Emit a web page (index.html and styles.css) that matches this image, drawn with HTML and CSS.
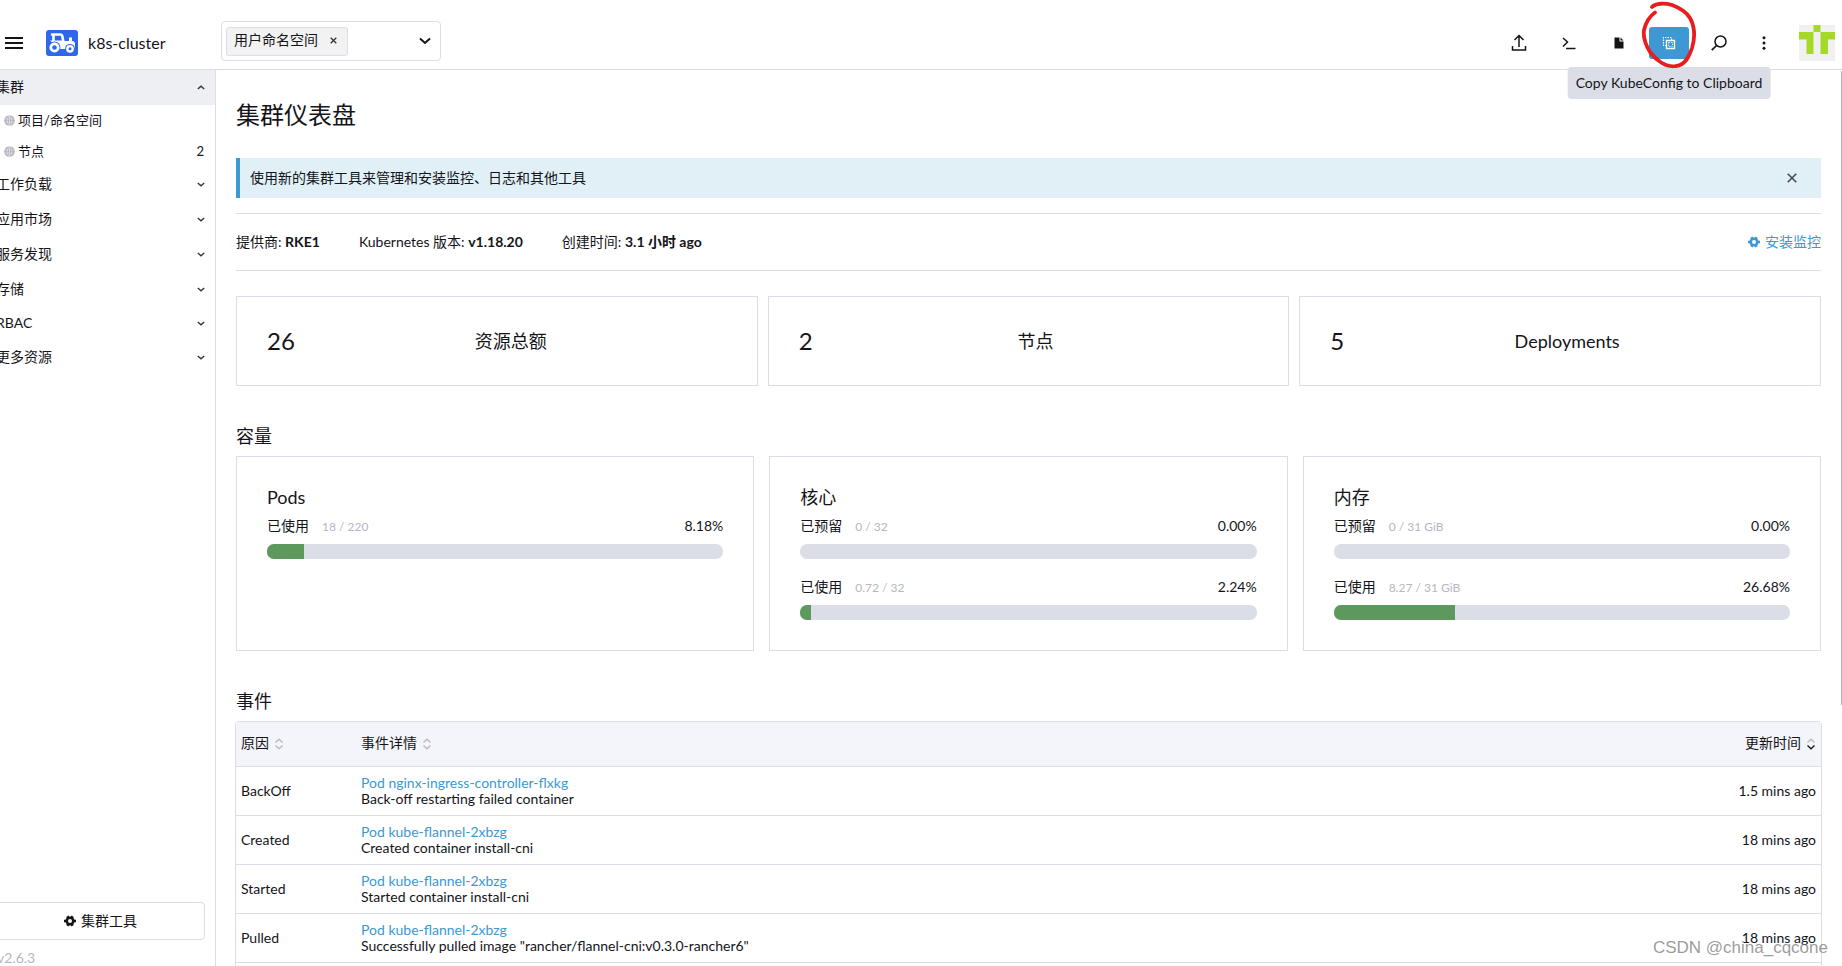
FILE: index.html
```html
<!DOCTYPE html>
<html lang="zh-CN">
<head>
<meta charset="utf-8">
<title>k8s-cluster</title>
<link rel="stylesheet" href="styles.css">
</head>
<body>
<svg class="defs" aria-hidden="true">
  <symbol id="down" viewBox="0 0 10 6"><path d="M1 1l4 3.6L9 1" fill="none" stroke="currentColor" stroke-width="1.7"/></symbol>
  <symbol id="globe" viewBox="0 0 12 12"><circle cx="6" cy="6" r="5.8" fill="#b3b4be"/><path d="M.8 4.200h10.400M.8 7.800h10.400M6 .5v11M5.500.8C2.800 3.500 2.800 8.500 5.500 11.200M6.500.8C9.200 3.500 9.200 8.500 6.500 11.200" fill="none" stroke="#fff" stroke-width=".45"/></symbol>
  <symbol id="gear" viewBox="0 0 12 12"><circle cx="6" cy="6" r="3.300" fill="none" stroke="currentColor" stroke-width="2.600"/><path d="M3.300 1.200l1 1.600M8.700 1.200l-1 1.600M0 6h2M10 6h2M3.300 10.800l1-1.600M8.700 10.800l-1-1.600" stroke="currentColor" stroke-width="2.600"/></symbol>
  <symbol id="sort" viewBox="0 0 10 12"><path d="M1.500 4.500L5 1.200l3.500 3.300" fill="none" stroke="#b9bac2" stroke-width="1.300"/><path d="M1.500 7.500L5 10.800l3.500-3.300" fill="none" stroke="currentColor" stroke-width="1.300"/></symbol>
</svg>

<header class="header">
  <button class="menu" aria-label="Menu"><svg width="18" height="12" viewBox="0 0 18 12"><path d="M0 1h18M0 6h18M0 11h18" stroke="#141419" stroke-width="2"/></svg></button>
  <svg class="logo" width="32" height="26" viewBox="0 0 32 26"><rect width="32" height="26" rx="3" fill="#2e68e9"/><path d="M6 4.500h8.500q1.500 0 1.800 1.500l1 5.500M7.500 6v5" fill="none" stroke="#fff" stroke-width="2.600" stroke-linejoin="round" stroke-linecap="round"/><path d="M4 10.500h13l1 .5h5V7.500h3V11q3 0 3 3v5H14z" fill="#fff"/><circle cx="8.500" cy="17.500" r="6" fill="#2e68e9"/><circle cx="8.500" cy="17.500" r="3.700" fill="none" stroke="#fff" stroke-width="2.800"/><circle cx="24" cy="18.800" r="4.900" fill="#2e68e9"/><circle cx="24" cy="18.800" r="2.700" fill="none" stroke="#fff" stroke-width="2.400"/></svg>
  <span class="cluster">k8s-cluster</span>
  <div class="filter">
    <span class="tag">用户命名空间 <button class="tag-x" aria-label="移除"><svg width="7" height="7" viewBox="0 0 7 7"><path d="M.7.7l5.600 5.600M6.300.7L.7 6.300" stroke="#333" stroke-width="1.300"/></svg></button></span>
    <button class="open" aria-label="展开"><svg width="12" height="8" viewBox="0 0 12 8"><path d="M1 1.500l5 4.500 5-4.500" fill="none" stroke="#141419" stroke-width="2"/></svg></button>
  </div>
  <nav class="actions">
    <button class="act" aria-label="Import YAML"><svg width="16" height="18" viewBox="0 0 16 18"><path d="M8 13V2M3.500 6L8 1.500 12.500 6M1.500 12v4h13v-4" fill="none" stroke="#141419" stroke-width="1.500"/></svg></button>
    <button class="act" aria-label="Kubectl Shell"><svg width="14" height="14" viewBox="0 0 14 14"><path d="M1 2l4.500 4L1 10.500M4 12.500h9.500" fill="none" stroke="#141419" stroke-width="1.500"/></svg></button>
    <button class="act" aria-label="Download KubeConfig"><svg width="10" height="12" viewBox="0 0 10 12"><path d="M.5.5h5v4h4v7h-9zM6.500.5l3 3h-3z" fill="#141419"/></svg></button>
    <div class="copy-wrap">
      <button class="act copy" aria-label="Copy KubeConfig" aria-describedby="tip"><svg width="14" height="14" viewBox="0 0 14 14"><path d="M4.500 9.500h-3v-8h8v3" fill="none" stroke="#fff" stroke-width="1.200" stroke-dasharray="1.500 1"/><path d="M4.500 4.500h8v8h-8z" fill="none" stroke="#fff" stroke-width="1.300"/><path d="M6.500 6.500h4v4h-4z" fill="none" stroke="#fff" stroke-width=".8" stroke-dasharray="1.500 1"/></svg></button>
      <div class="tip" id="tip" role="tooltip">Copy KubeConfig to Clipboard</div>
      <svg class="ring" width="60" height="70" viewBox="0 0 60 70"><path d="M11 6C15 2 24 2 31 4C39 7 45 10 49 17C54 26 54 37 51 47C48 56 44 64 35 65C25 67 15 59 9 51C4 43 2 36 3 29C5 21 9 15 14 11.500" fill="none" stroke="#e81e1e" stroke-width="3.800" stroke-linecap="round"/></svg>
    </div>
    <button class="act" aria-label="Search"><svg width="16" height="16" viewBox="0 0 16 16"><circle cx="9.500" cy="6.500" r="5.500" fill="none" stroke="#141419" stroke-width="1.500"/><path d="M5.500 10.500L.8 15.200" stroke="#141419" stroke-width="1.700"/></svg></button>
    <button class="act dots" aria-label="More"><svg width="4" height="14" viewBox="0 0 4 14"><g fill="#141419"><circle cx="2" cy="1.700" r="1.500"/><circle cx="2" cy="7" r="1.500"/><circle cx="2" cy="12.300" r="1.500"/></g></svg></button>
    <svg class="avatar" width="36" height="36" viewBox="0 0 36 36"><path fill="#f0f0f0" d="M0 0h36v36H0z"/><path fill="#a5d927" d="M14.500 0h7v7h-7zM0 7h14.500v22h-7V14.500H0zM21.500 7H36v7.500h-7V29h-7.500z"/></svg>
  </nav>
</header>

<div class="body">
  <aside class="side">
    <nav>
      <button class="group open-group">集群<svg class="chev up"><use href="#down"/></svg></button>
      <a class="item" href="#"><svg class="globe"><use href="#globe"/></svg>项目/命名空间</a>
      <a class="item" href="#"><svg class="globe"><use href="#globe"/></svg>节点<span class="count">2</span></a>
      <button class="group">工作负载<svg class="chev"><use href="#down"/></svg></button>
      <button class="group">应用市场<svg class="chev"><use href="#down"/></svg></button>
      <button class="group">服务发现<svg class="chev"><use href="#down"/></svg></button>
      <button class="group">存储<svg class="chev"><use href="#down"/></svg></button>
      <button class="group latin">RBAC<svg class="chev"><use href="#down"/></svg></button>
      <button class="group">更多资源<svg class="chev"><use href="#down"/></svg></button>
    </nav>
    <div class="foot">
      <button class="tools"><svg class="gear"><use href="#gear"/></svg>集群工具</button>
      <div class="version">v2.6.3</div>
    </div>
  </aside>

  <main class="main">
    <h1>集群仪表盘</h1>
    <div class="banner"><span>使用新的集群工具来管理和安装监控、日志和其他工具</span><button class="close" aria-label="关闭"><svg width="10" height="10" viewBox="0 0 10 10"><path d="M.7.7l8.600 8.600M9.300.7L.7 9.300" stroke="#4a4b52" stroke-width="1.600"/></svg></button></div>
    <div class="glance">
      <div>提供商: <b>RKE1</b></div>
      <div>Kubernetes 版本: <b>v1.18.20</b></div>
      <div>创建时间: <b>3.1 小时 ago</b></div>
      <a class="monitor" href="#"><svg class="gear"><use href="#gear"/></svg>安装监控</a>
    </div>
    <section class="counts">
      <div class="count-card"><span class="num">26</span><span class="name">资源总额</span></div>
      <div class="count-card"><span class="num">2</span><span class="name">节点</span></div>
      <div class="count-card"><span class="num">5</span><span class="name">Deployments</span></div>
    </section>
    <h2>容量</h2>
    <section class="gauges">
      <div class="gauge"><h3>Pods</h3>
        <div class="row"><span>已使用</span><small>18 / 220</small><span class="pct">8.18%</span></div><div class="bar"><div class="fill" style="width:8.18%"></div></div>
      </div>
      <div class="gauge"><h3>核心</h3>
        <div class="row"><span>已预留</span><small>0 / 32</small><span class="pct">0.00%</span></div><div class="bar"></div>
        <div class="row"><span>已使用</span><small>0.72 / 32</small><span class="pct">2.24%</span></div><div class="bar"><div class="fill" style="width:2.24%"></div></div>
      </div>
      <div class="gauge"><h3>内存</h3>
        <div class="row"><span>已预留</span><small>0 / 31 GiB</small><span class="pct">0.00%</span></div><div class="bar"></div>
        <div class="row"><span>已使用</span><small>8.27 / 31 GiB</small><span class="pct">26.68%</span></div><div class="bar"><div class="fill" style="width:26.68%"></div></div>
      </div>
    </section>
    <h2 class="events-title">事件</h2>
    <table class="events">
      <thead><tr><th class="reason">原因<svg class="sort"><use href="#sort"/></svg></th><th>事件详情<svg class="sort"><use href="#sort"/></svg></th><th class="time">更新时间<svg class="sort active"><use href="#sort"/></svg></th></tr></thead>
      <tbody>
        <tr><td>BackOff</td><td><a href="#">Pod nginx-ingress-controller-flxkg</a><div>Back-off restarting failed container</div></td><td class="time">1.5 mins ago</td></tr>
        <tr><td>Created</td><td><a href="#">Pod kube-flannel-2xbzg</a><div>Created container install-cni</div></td><td class="time">18 mins ago</td></tr>
        <tr><td>Started</td><td><a href="#">Pod kube-flannel-2xbzg</a><div>Started container install-cni</div></td><td class="time">18 mins ago</td></tr>
        <tr><td>Pulled</td><td><a href="#">Pod kube-flannel-2xbzg</a><div>Successfully pulled image "rancher/flannel-cni:v0.3.0-rancher6"</div></td><td class="time">18 mins ago</td></tr>
        <tr><td></td><td></td><td></td></tr>
      </tbody>
    </table>
    <div class="scroll"></div>
  </main>
</div>
<div class="watermark">CSDN @china_cqcone</div>
</body>
</html>
```

FILE: styles.css
```css
* { box-sizing: border-box; }
body {
  margin: 0;
  height: 100vh;
  display: flex;
  flex-direction: column;
  overflow: hidden;
  background: #fff;
  color: #141419;
  font: 14px/20px Lato, "Noto Sans CJK SC", sans-serif;
}
button { border: 0; padding: 0; background: none; color: inherit; font: inherit; }
a { color: #3d98d3; text-decoration: none; }
svg { display: block; flex: none; }
.defs { position: absolute; width: 0; height: 0; }

.header {
  flex: none;
  height: 70px;
  padding: 16px 7px 0 5px;
  display: flex;
  align-items: center;
  border-bottom: 1px solid #dcdee7;
}
.logo { margin-left: 23px; }
.cluster { margin-left: 10px; width: 133px; font-size: 16px; }
.filter {
  width: 220px;
  height: 40px;
  margin-bottom: 3px;
  padding: 0 9px 0 4px;
  display: flex;
  align-items: center;
  justify-content: space-between;
  border: 1px solid #dcdee7;
  border-radius: 4px;
}
.tag {
  height: 29px;
  padding: 0 10px 2px 7px;
  display: flex;
  align-items: center;
  gap: 12px;
  background: #f2f2f2;
  border: 1px solid #dcdee7;
  border-radius: 3px;
}
.actions { margin-left: auto; display: flex; align-items: center; gap: 10px; }
.act {
  width: 40px;
  height: 32px;
  display: flex;
  align-items: center;
  justify-content: center;
  border-radius: 3px;
}
.dots { width: 30px; }
.avatar { margin-left: 10px; }
.copy-wrap { position: relative; }
.copy { background: #3d98d3; }
.tip {
  position: absolute;
  top: 40px;
  left: 50%;
  transform: translateX(-50%);
  padding: 6px 8px;
  background: #dcdee7;
  border-radius: 4px;
  white-space: nowrap;
}
.tip::before {
  content: "";
  position: absolute;
  top: -5px;
  left: 50%;
  margin-left: -5px;
  border: 5px solid transparent;
  border-top: 0;
  border-bottom-color: #dcdee7;
}
.ring { position: absolute; left: -8px; top: -26px; }

.body { flex: 1; min-height: 0; display: flex; }
.side {
  flex: none;
  width: 216px;
  display: flex;
  flex-direction: column;
  justify-content: space-between;
  border-right: 1px solid #dcdee7;
  overflow: hidden;
}
.group {
  width: 100%;
  height: 35px;
  padding: 0 10px 1px 0;
  display: flex;
  align-items: center;
  justify-content: space-between;
  text-indent: -4px;
}
.latin { height: 33px; }
.open-group { background: #edeff3; }
.chev { width: 8px; height: 5px; color: #333; }
.up { transform: scaleY(-1); }
.item {
  height: 31px;
  padding: 0 11px 1px 4px;
  display: flex;
  align-items: center;
  gap: 3px;
  color: #141419;
  font-size: 13px;
}
.globe { width: 11px; height: 11px; }
.count { margin-left: auto; }
.gear { width: 12px; height: 12px; }
.tools {
  width: 209px;
  height: 38px;
  margin-left: -4px;
  display: flex;
  align-items: center;
  justify-content: center;
  gap: 5px;
  border: 1px solid #dcdee7;
  border-radius: 4px;
}
.version { height: 26px; padding-top: 8px; line-height: 20px; text-indent: -3px; color: #b6b6c2; }

.main { position: relative; flex: 1; padding: 30px 21px 0 20px; overflow: hidden; }
h1, h2, h3 { margin: 0; font-weight: 400; }
h1 { font-size: 24px; line-height: 30px; }
.banner {
  height: 40px;
  margin-top: 28px;
  padding: 0 24px 0 10px;
  display: flex;
  align-items: center;
  justify-content: space-between;
  background: #e1f0f7;
  border-left: 4px solid #3d98d3;
}
.glance {
  height: 58px;
  margin: 15px 0 25px;
  display: flex;
  align-items: center;
  gap: 39px;
  border: solid #dcdee7;
  border-width: 1px 0;
}
.monitor { margin-left: auto; display: flex; align-items: center; gap: 5px; }
.counts, .gauges { display: grid; grid-template-columns: repeat(3, 1fr); gap: 10px; }
.count-card {
  height: 90px;
  padding: 0 30px;
  display: flex;
  align-items: center;
  border: 1px solid #dcdee7;
}
.num { font-size: 24px; }
.name { flex: 1; text-align: center; font-size: 18px; }
h2 { margin-top: 37px; font-size: 18px; line-height: 26px; }
.gauges { margin-top: 7px; gap: 15px; }
.gauge { padding: 30px 30px 12px; border: 1px solid #dcdee7; }
h3 { margin-bottom: 8px; font-size: 18px; line-height: 21px; }
.row { height: 20px; margin-bottom: 8px; display: flex; align-items: baseline; gap: 13px; }
.row small { font-size: 12px; color: #b6b6c2; }
.pct { margin-left: auto; }
.bar { height: 15px; margin-bottom: 18px; background: #dcdee7; border-radius: 7px; overflow: hidden; }
.fill { height: 100%; background: #5d995d; }
.events {
  width: calc(100% + 2px);
  margin: 7px -1px 0;
  border: 1px solid #dcdee7;
  border-radius: 4px;
  border-spacing: 0;
  line-height: 16px;
}
.events th { height: 44px; padding: 0 5px 2px; background: #f4f5fa; font-weight: 400; text-align: left; }
.events td { height: 49px; padding: 0 5px; border-top: 1px solid #dcdee7; }
.events .reason { width: 120px; }
.events .time { text-align: right; }
.sort { display: inline-block; width: 10px; height: 12px; margin-left: 5px; vertical-align: -2px; color: #b9bac2; }
.active { color: #141419; }
.scroll { position: absolute; right: 0; top: 1px; width: 1px; height: 634px; background: #b6b6c2; }
.watermark {
  position: absolute;
  right: 14px;
  bottom: 8px;
  color: rgba(110, 110, 110, .7);
  font: 17px/20px "Liberation Sans", sans-serif;
}
```
